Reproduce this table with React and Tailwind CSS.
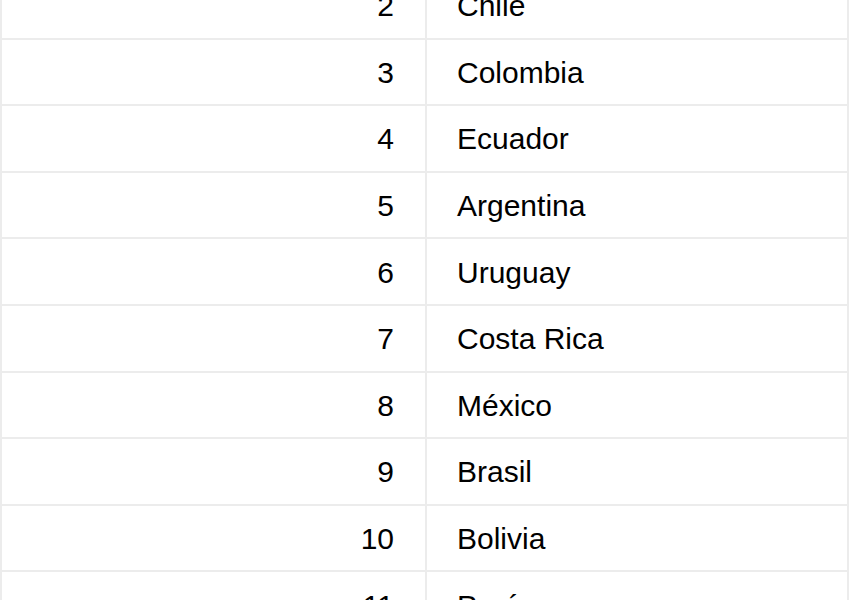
import React from 'react'

const rows = [
  [2, 'Chile'],
  [3, 'Colombia'],
  [4, 'Ecuador'],
  [5, 'Argentina'],
  [6, 'Uruguay'],
  [7, 'Costa Rica'],
  [8, 'México'],
  [9, 'Brasil'],
  [10, 'Bolivia'],
  [11, 'Perú'],
]

const App = () => {
  return (
    <div className="w-[850px] h-[600px] overflow-hidden bg-white text-black font-['Liberation_Sans',Arial,sans-serif]">
      <div className="-mt-[27px] w-[849px] border-l-2 border-r-2 border-[#ececec]">
        {rows.map(([n, name]) => (
          <div key={n} className="flex h-[66.6px] border-b-2 border-[#ececec] text-[30px] leading-none">
            <div className="w-[425px] border-r-2 border-[#ececec] flex items-center justify-end pr-[31px] pt-[2px]">
              {n}
            </div>
            <div className="flex-1 flex items-center pl-[30px] pt-[2px]">
              {name}
            </div>
          </div>
        ))}
      </div>
    </div>
  )
}

export default App
